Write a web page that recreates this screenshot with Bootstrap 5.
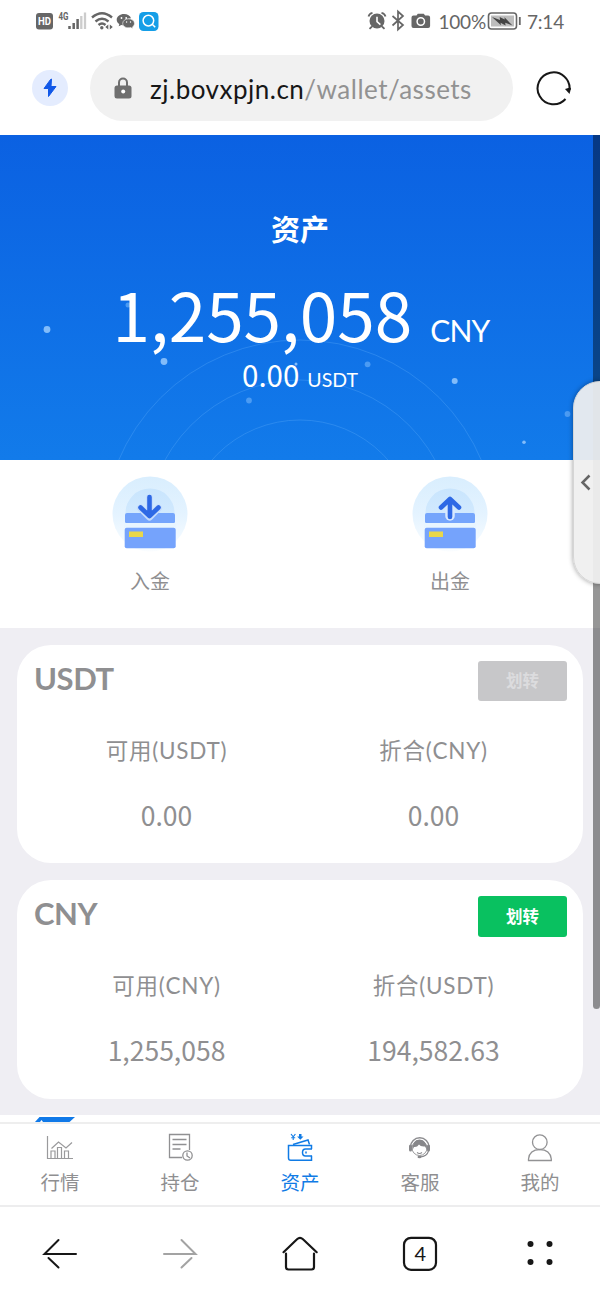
<!DOCTYPE html>
<html lang="zh-CN">
<head>
<meta charset="utf-8">
<meta name="viewport" content="width=device-width, initial-scale=1">
<title>资产</title>
<link href="https://cdn.jsdelivr.net/npm/bootstrap@5.3.0/dist/css/bootstrap.min.css" rel="stylesheet">
<style>
  body { font-family: "Noto Sans CJK SC", sans-serif; color: #8f8f91; overflow: hidden; background: #fff; }
  svg { display: block; flex: none; }
  .latin { font-family: Lato, "Noto Sans CJK SC", sans-serif; }
  .phone { width: 600px; height: 1300px; overflow: hidden; }
  .status-bar { height: 42px; padding: 0 36px 0 36px; color: #666; font-size: 19px; line-height: 42px; }
  .status-bar .latin { letter-spacing: -.2px; padding-top: 1px; }
  .address-bar { height: 93px; padding: 13px 28px 14px 32px; }
  .boost { width: 36px; height: 36px; background: #e4ecfe; }
  .address { width: 423px; height: 66px; flex: none; margin-left: 22px; margin-right: 23px; padding-left: 24px; background: #f1f1f1; color: #929292; font-size: 26px; letter-spacing: .5px; }
  .address-text { margin-left: 18px; margin-top: 3px; white-space: nowrap; }
  .host { color: #171717; }
  .hero { height: 325px; background: linear-gradient(#0b61e2, #127bea); color: #fff; }
  .hero-art { left: 0; top: 0; }
  .hero-title { font-size: 29px; line-height: 40px; padding-top: 73px; font-weight: 700; }
  .total { font-size: 67.5px; line-height: 80px; margin-top: 25px; padding-left: 2px; }
  .total-unit { font-size: 30px; letter-spacing: -.8px; margin-left: 18px; }
  .sub-total { font-size: 29.5px; line-height: 40px; margin-top: -16px; }
  .sub-total .latin { font-size: 19.5px; margin-left: 8px; }
  .actions { height: 168px; padding-top: 16px; font-size: 20px; line-height: 28px; border-radius: 3px 0 0 0; }
  .action-label { margin-top: 15px; }
  .wallets { height: 487px; padding: 16.5px 17px 0; gap: 17px; background: #efeef3; }
  .wallet { height: 218.5px; border-radius: 34px; padding: 16px; --bs-card-border-width: 0; color: inherit; }
  .wallet-name { font-size: 31px; line-height: 36px; font-weight: 700; margin: -1px 0 0 1px; letter-spacing: -.4px; }
  .transfer { width: 89px; height: 41px; padding: 0; border: 0; border-radius: 3px; font-size: 16.5px; line-height: 39px; font-weight: 700; background: #09c160; color: #fff; }
  .transfer:disabled { background: #c7c7c9; color: #dcdcde; opacity: 1; height: 40px; margin-bottom: 1px; }
  .field-label { font-size: 22.5px; letter-spacing: .75px; line-height: 32px; margin-top: 33px; }
  .field-value { font-size: 26.5px; line-height: 36px; margin-top: 30px; }
  .peek { height: 7px; padding-left: 34px; }
  .tabs { height: 85px; border-top: 2px solid #eee; border-bottom: 2px solid #ededee; font-size: 19.5px; line-height: 28px; padding-top: 6px; }
  .tabs svg { height: 36px; width: 40px; }
  .tabs .current { color: #107be5; }
  .tab-label { margin-top: 2px; }
  .system-nav { height: 93px; color: #171717; }
  .scroll-thumb { right: 0; top: 135px; width: 7px; height: 874px; background: rgba(0,0,0,.41); border-radius: 0 0 4px 4px; }
  .drawer { left: 573px; top: 381px; width: 29px; height: 203px; border-radius: 27px 0 0 27px; background: rgba(239,239,239,.94); box-shadow: 0 0 5px rgba(0,0,0,.4); border: 1px solid #d5d5d5; padding-bottom: 2px; }
</style>
</head>
<body>
<svg width="0" height="0" class="position-absolute" aria-hidden="true">
  <linearGradient id="halo" x1="0" y1="0" x2="0" y2="1"><stop offset="0" stop-color="#d9eefe"/><stop offset=".5" stop-color="#e4f3ff"/><stop offset="1" stop-color="#fafdff"/></linearGradient>
  <linearGradient id="innerHalo" x1="0" y1="0" x2="0" y2="1"><stop offset="0" stop-color="#c9e5fd"/><stop offset="1" stop-color="#d9edff"/></linearGradient>
</svg>
<main class="phone position-relative d-flex flex-column">

  <header class="status-bar d-flex align-items-center justify-content-between">
    <svg width="124" height="42" viewBox="36 0 124 42" aria-label="HD 4G">
      <rect x="36" y="13" width="17" height="16.500" rx="3" fill="#666"/>
      <text x="38" y="25.200" font-family="Roboto, sans-serif" font-size="10.500" font-weight="700" fill="#fff" textLength="13" lengthAdjust="spacingAndGlyphs">HD</text>
      <text x="58.500" y="20" font-family="Roboto, sans-serif" font-size="10" font-weight="700" fill="#666" textLength="10" lengthAdjust="spacingAndGlyphs">4G</text>
      <path d="M69.500 26v3M73.700 23v6M77.600 19v10" stroke="#666" stroke-width="2.500"/>
      <path d="M81.300 16v13M85 12.500v16.500" stroke="#ccc" stroke-width="2.300"/>
      <g fill="none" stroke="#666" stroke-width="2.400"><path d="M92 17.500q10-8.500 20 0M95.500 21.500q6.500-5.500 13 0M98.500 25q3.500-3 7 0"/></g>
      <circle cx="101.800" cy="27.800" r="1.700" fill="#666"/>
      <path d="M105.300 27l3-2.500v5zM112.800 27l-3-2.500v5z" fill="#666"/>
      <path d="M124 14c-4 0-7.300 2.500-7.300 5.700 0 1.800 1 3.300 2.600 4.300l-.6 2.200 2.700-1.300q1.200.4 2.600.4h.6c-1-4 2.300-7 6.400-7C130.300 15.600 127.500 14 124 14z" fill="#666"/>
      <path d="M128.600 18.800c3.300 0 5.900 2 5.900 4.600 0 1.400-.8 2.600-2 3.500l.5 1.900-2.300-1.200c-4.200 1-8-1-8-4.200 0-2.600 2.600-4.600 5.900-4.600z" fill="#666" stroke="#fff" stroke-width=".6"/>
      <g fill="#fff"><circle cx="121.500" cy="18" r=".9"/><circle cx="126.200" cy="18" r=".9"/><circle cx="126.600" cy="22" r=".7"/><circle cx="130.500" cy="22" r=".7"/></g>
      <rect x="139" y="12" width="19.500" height="19" rx="4.500" fill="#159ee7"/>
      <circle cx="148.400" cy="20.600" r="5.300" fill="none" stroke="#fff" stroke-width="1.500"/><path d="M152.200 24.300l3 3" stroke="#fff" stroke-width="1.500"/>
    </svg>
    <div class="d-flex align-items-center">
      <svg width="68" height="42" viewBox="368 0 68 42">
        <circle cx="379" cy="21" r="7.500" fill="#666"/><path d="M370.500 16.500q.8-3 4-3.700M387.500 16.500q-.8-3-4-3.700M374 26.500l-2.500 2.300M384 26.500l2.500 2.300" stroke="#666" stroke-width="1.800" fill="none"/><path d="M379 16.700v5l3.400 2.900" stroke="#fff" stroke-width="1.600" fill="none"/>
        <path d="M394.500 16l10.500 9-5 4.500v-18l5 4.500-10.500 9.500" fill="none" stroke="#666" stroke-width="1.700"/>
        <path d="M415.500 15.500h3l1.300-1.800h6l1.300 1.800h3q2 0 2 2v8.500q0 2-2 2h-14.600q-2 0-2-2v-8.500q0-2 2-2z" fill="#666"/><circle cx="422.800" cy="21.500" r="3.700" fill="none" stroke="#fff" stroke-width="1.500"/>
      </svg>
      <span class="latin ms-1">100%</span>
      <svg width="37" height="42" viewBox="486 0 37 42">
        <rect x="488.500" y="13" width="28" height="16" rx="3" fill="#fff" stroke="#666" stroke-width="1.600"/><rect x="491" y="15.500" width="23" height="11" fill="#bdbdbd"/>
        <path d="M492 17l8 3-.3-3 5 2.600-.2-2.300 8 8.200-7.300-2.700.4 2.600-5-2.700.4 2.500z" fill="#444"/><path d="M519.800 17v8" stroke="#666" stroke-width="1.800"/>
      </svg>
      <span class="latin ms-1">7:14</span>
    </div>
  </header>

  <div class="address-bar d-flex align-items-center">
    <div class="boost rounded-circle d-flex align-items-center justify-content-center">
      <svg width="16" height="20" viewBox="0 0 16 20"><path d="M8.500 1.500L2 10.500h4.500L6.500 18.500 14 8.500H9L9.500 1z" fill="#1158e8" stroke="#1158e8" stroke-width="1" stroke-linejoin="round"/></svg>
    </div>
    <div class="address rounded-pill d-flex align-items-center">
      <svg width="18" height="24" viewBox="0 0 18 24"><path d="M5 10V6.500a4 4 0 0 1 8 0V10" fill="none" stroke="#6f6f6f" stroke-width="2"/><rect x=".5" y="9.500" width="17" height="13" rx="2.500" fill="#6f6f6f"/><circle cx="9.200" cy="15.500" r="2" fill="#fff"/></svg>
      <div class="address-text latin"><span class="host">zj.bovxpjn.cn</span>/wallet/assets</div>
    </div>
    <svg width="36" height="38" viewBox="0 0 36 38"><path d="M29.500 30A16 16 0 1 1 33.500 21" fill="none" stroke="#171717" stroke-width="2"/><path d="M29 20l5-1.500 1 1L33.500 25z" fill="#171717"/></svg>
  </div>

  <section class="hero position-relative text-center">
    <svg class="hero-art position-absolute" width="600" height="325" viewBox="0 135 600 325">
      <g fill="none" stroke="#55a5f7" stroke-opacity=".38"><circle cx="300" cy="537" r="197"/><circle cx="300" cy="534" r="154"/><circle cx="300" cy="537" r="117"/></g>
      <g fill="#82bcfa"><circle cx="47" cy="329.500" r="3.400"/><circle cx="164" cy="361.500" r="3.400"/><circle cx="454.700" cy="381" r="3"/><circle cx="524" cy="442.300" r="1.800"/><circle cx="296" cy="364" r="1.500"/></g>
      <g fill="#4b9bf3"><circle cx="249" cy="400.500" r="2.900"/><circle cx="367.600" cy="364.300" r="2.900"/><circle cx="567.500" cy="414" r="2.900"/><circle cx="128" cy="305" r="2.500"/></g>
    </svg>
    <div class="position-relative">
      <h1 class="hero-title mb-0">资产</h1>
      <div class="total d-flex justify-content-center align-items-baseline"><span>1,255,058</span><span class="total-unit latin">CNY</span></div>
      <div class="sub-total d-flex justify-content-center align-items-baseline"><span>0.00</span><span class="latin">USDT</span></div>
    </div>
  </section>

  <section class="actions row g-0 bg-white text-center">
    <div class="col-6 d-flex flex-column align-items-center">
      <svg width="76" height="76" viewBox="0 0 76 76"><circle cx="38" cy="38" r="37.500" fill="url(#halo)"/><circle cx="38" cy="37" r="24.500" fill="url(#innerHalo)"/><rect x="13" y="37" width="50" height="10.500" rx="2" fill="#75a5fc"/><path d="M12 47h52v5H12z" fill="#e8f5ff"/><rect x="12.700" y="51.700" width="51" height="20.500" rx="2" fill="#75a3fc"/><rect x="17" y="55.500" width="14" height="5.500" fill="#e9d749"/><path d="M37.500 22v17M28.500 32l9 9 9-9" fill="none" stroke="#c5dcfc" stroke-width="7" stroke-linecap="round" stroke-linejoin="round"/><path d="M37.500 21v17M28.500 31.500l9 8.500 9-8.500" fill="none" stroke="#2e69e5" stroke-width="4.600" stroke-linecap="round" stroke-linejoin="round"/></svg>
      <div class="action-label">入金</div>
    </div>
    <div class="col-6 d-flex flex-column align-items-center">
      <svg width="76" height="76" viewBox="0 0 76 76"><circle cx="38" cy="38" r="37.500" fill="url(#halo)"/><circle cx="38" cy="37" r="24.500" fill="url(#innerHalo)"/><rect x="13" y="37" width="50" height="10.500" rx="2" fill="#75a5fc"/><path d="M12 47h52v5H12z" fill="#e8f5ff"/><rect x="12.700" y="51.700" width="51" height="20.500" rx="2" fill="#75a3fc"/><rect x="17" y="55.500" width="14" height="5.500" fill="#e9d749"/><path d="M38 34v6" stroke="#d7e9ff" stroke-width="9.500" stroke-linecap="round"/><path d="M38 41V23M29 31.500l9-8.500 9 8.500" fill="none" stroke="#2e69e5" stroke-width="4.600" stroke-linecap="round" stroke-linejoin="round"/></svg>
      <div class="action-label">出金</div>
    </div>
  </section>

  <section class="wallets d-flex flex-column">
    <article class="wallet card">
      <div class="d-flex justify-content-between align-items-start"><h2 class="wallet-name latin">USDT</h2><button class="transfer btn" disabled>划转</button></div>
      <div class="row g-0 text-center">
        <div class="col-6"><div class="field-label latin">可用(USDT)</div><div class="field-value">0.00</div></div>
        <div class="col-6"><div class="field-label latin">折合(CNY)</div><div class="field-value">0.00</div></div>
      </div>
    </article>
    <article class="wallet card">
      <div class="d-flex justify-content-between align-items-start"><h2 class="wallet-name latin">CNY</h2><button class="transfer btn">划转</button></div>
      <div class="row g-0 text-center">
        <div class="col-6"><div class="field-label latin">可用(CNY)</div><div class="field-value">1,255,058</div></div>
        <div class="col-6"><div class="field-label latin">折合(USDT)</div><div class="field-value">194,582.63</div></div>
      </div>
    </article>
  </section>

  <div class="peek bg-white"><svg width="42" height="7" viewBox="34 1115 42 7"><path d="M35 1122l4.500-5H75l-5.500 5z" fill="#1079e8"/><path d="M40 1122l1.500-2 1.500 2z" fill="#fff"/></svg></div>

  <nav class="tabs row g-0 bg-white text-center">
    <div class="col d-flex flex-column align-items-center">
      <svg viewBox="40 1129 40 36" fill="none" stroke="#9a9a9c" stroke-width="1.200"><path d="M47.500 1135v22.500H73M51 1157v-7h4v7M57.500 1157v-10.500h4v10.500M64.500 1157v-7h4v7M51.500 1147.500l7-6.500 7.500 6 6-5.500"/></svg>
      <div class="tab-label">行情</div></div>
    <div class="col d-flex flex-column align-items-center">
      <svg viewBox="160 1129 40 36" fill="none" stroke="#909092" stroke-width="1.300"><path d="M182 1156.500h-12.500v-23H189.500V1149M172.500 1138.500h14M172.500 1143.500h14M172.500 1148h8"/><circle cx="187.500" cy="1154.500" r="4.700"/><path d="M187 1151.500v3.500l3 2"/></svg>
      <div class="tab-label">持仓</div></div>
    <div class="col d-flex flex-column align-items-center current">
      <svg viewBox="280 1129 40 36" fill="none" stroke="currentColor" stroke-width="1.500"><path d="M311.500 1148v-3.500h-23v12.500q0 2.300 2.300 2.300h20.700v-4.500"/><path d="M293 1143.500l15-4.500 1.500 4.500"/><path d="M312 1148h-6.500q-3 0-3 3.500t3 3.500h6.500M306 1150.500v2"/><path d="M291 1133l2.200 2.800 2.200-2.800M293.200 1135.800v3.200M291.200 1136.700h4" stroke-width="1.100"/><path d="M299 1133h2.500v2.500h2l-3.200 3.200-3.200-3.200h1.900z" fill="currentColor" stroke="none"/></svg>
      <div class="tab-label">资产</div></div>
    <div class="col d-flex flex-column align-items-center">
      <svg viewBox="400 1129 40 36"><circle cx="419.500" cy="1147" r="7.500" fill="#fff" stroke="#98989a"/><path d="M410.500 1146a9.200 9.200 0 0 1 18.500 0" fill="none" stroke="#8d8d90" stroke-width="1.500"/><path d="M412.500 1149q-.5-10 7-10.500 7.500.5 7.500 10.500l-2-3.500q-4.500.5-6-2-2 3-5 2.500z" fill="#87878a"/><rect x="409" y="1143.500" width="3" height="7" rx="1.500" fill="#88888b"/><rect x="427" y="1143.500" width="3" height="7" rx="1.500" fill="#88888b"/><path d="M428.500 1150q-1.500 5.500-8.500 6M417 1151.500q2.500 2 5 0" stroke="#88888b" fill="none" stroke-width="1.100"/><ellipse cx="419.500" cy="1156" rx="2" ry="1.300" fill="#88888b"/></svg>
      <div class="tab-label">客服</div></div>
    <div class="col d-flex flex-column align-items-center">
      <svg viewBox="520 1129 40 36" fill="none" stroke="#929294" stroke-width="1.300"><circle cx="539.800" cy="1141.200" r="7.300"/><path d="M528.500 1159.500V1158q1-9.300 11.300-9.300t11.500 9.300v1.500z"/></svg>
      <div class="tab-label">我的</div></div>
  </nav>

  <footer class="system-nav row g-0 align-items-center">
    <div class="col d-flex justify-content-center"><svg width="40" height="40" viewBox="40 1234 40 40" fill="none" stroke="#171717" stroke-width="2" stroke-linecap="round"><path d="M76 1254H44.500l14-14M48.500 1258l10 9.500"/></svg></div>
    <div class="col d-flex justify-content-center"><svg width="40" height="40" viewBox="160 1234 40 40" fill="none" stroke="#a3a3a3" stroke-width="2" stroke-linecap="round"><path d="M164 1254h31.500l-14-14M191.500 1258l-10 9.500"/></svg></div>
    <div class="col d-flex justify-content-center"><svg width="40" height="40" viewBox="280 1234 40 40" fill="none" stroke="#171717" stroke-width="2.200" stroke-linecap="round"><path d="M283.500 1252.200l13.500-13q3-2.700 6 0l13.700 13M286 1253.500V1267q0 2.500 2.500 2.500h23q2.500 0 2.500-2.500v-13.500"/></svg></div>
    <div class="col d-flex justify-content-center"><svg width="40" height="40" viewBox="400 1234 40 40"><rect x="404" y="1237.800" width="32" height="32" rx="7" fill="none" stroke="#171717" stroke-width="2.200"/><text x="420.200" y="1261" text-anchor="middle" font-family="Lato, sans-serif" font-size="20" fill="#171717">4</text></svg></div>
    <div class="col d-flex justify-content-center"><svg width="40" height="40" viewBox="520 1234 40 40" fill="#171717"><circle cx="530.500" cy="1244" r="3"/><circle cx="549.500" cy="1244" r="3"/><circle cx="530.500" cy="1262" r="3"/><circle cx="549.500" cy="1262" r="3"/></svg></div>
  </footer>

  <div class="scroll-thumb position-absolute"></div>
  <div class="drawer position-absolute d-flex align-items-center"><svg width="24" height="24" viewBox="0 0 24 24"><path d="M15.500 5.500L8.500 12.500l7 7" fill="none" stroke="#656565" stroke-width="2.500"/></svg></div>
</main>
<script src="https://cdn.jsdelivr.net/npm/bootstrap@5.3.0/dist/js/bootstrap.bundle.min.js"></script>
</body>
</html>
